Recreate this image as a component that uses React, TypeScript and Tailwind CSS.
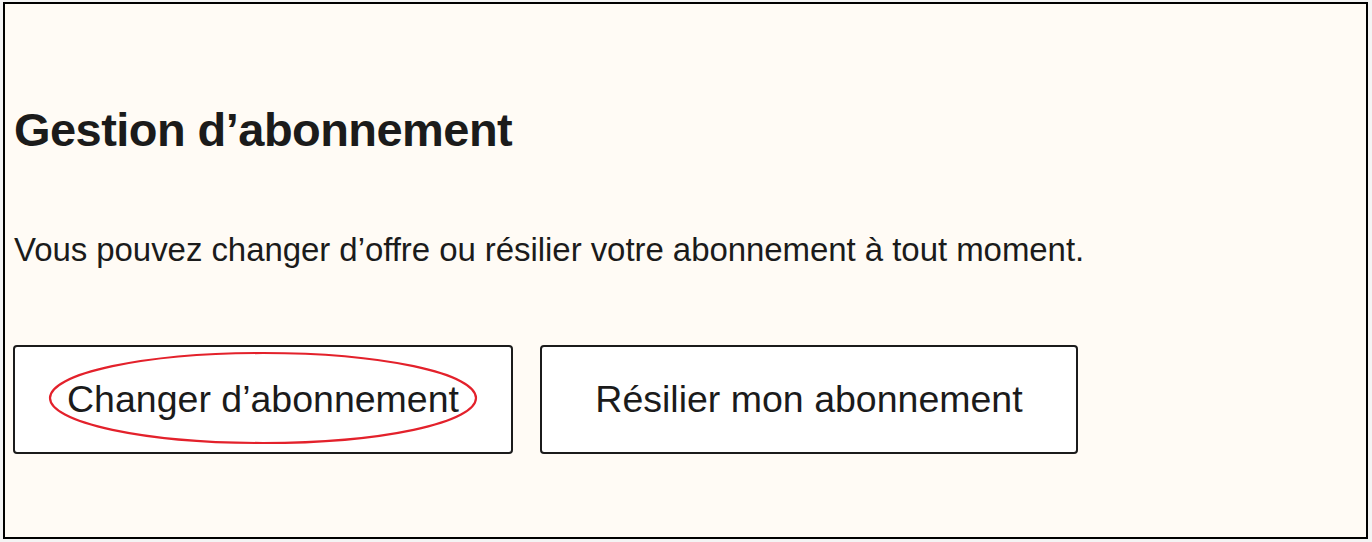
export default function App() {
  return (
    <div className="h-[542px] w-[1372px] bg-[#f4f4f4] pl-[3px] pt-[2px] font-['Liberation_Sans',Arial,sans-serif] text-[#1b1b1b]">
      <div className="h-[537px] w-[1365px] border-2 border-black bg-[#fffbf5] px-[8px] pt-[98px]">
        <h2 className="pl-[1px] text-[47px] font-bold leading-[55px] tracking-[-0.55px]">Gestion d’abonnement</h2>
        <p className="mt-[73px] pl-[1px] text-[33px] leading-[40px] tracking-[-0.06px]">
          Vous pouvez changer d’offre ou résilier votre abonnement à tout moment.
        </p>
        <div className="mt-[75px] flex gap-[27px]">
          <div className="relative">
            <button
              type="button"
              className="flex h-[109px] w-[500px] items-center justify-center rounded-[4px] border-2 border-[#1b1b1b] bg-white text-[37.5px]"
            >
              Changer d’abonnement
            </button>
            <svg className="pointer-events-none absolute left-[27px] top-[5px]" width="446" height="96" viewBox="0 0 446 96">
              <ellipse cx="223" cy="48" rx="213" ry="45" fill="none" stroke="#e3212b" strokeWidth="2.2" />
            </svg>
          </div>
          <button
            type="button"
            className="flex h-[109px] w-[538px] items-center justify-center rounded-[4px] border-2 border-[#1b1b1b] bg-white text-[37.5px]"
          >
            Résilier mon abonnement
          </button>
        </div>
      </div>
    </div>
  );
}
